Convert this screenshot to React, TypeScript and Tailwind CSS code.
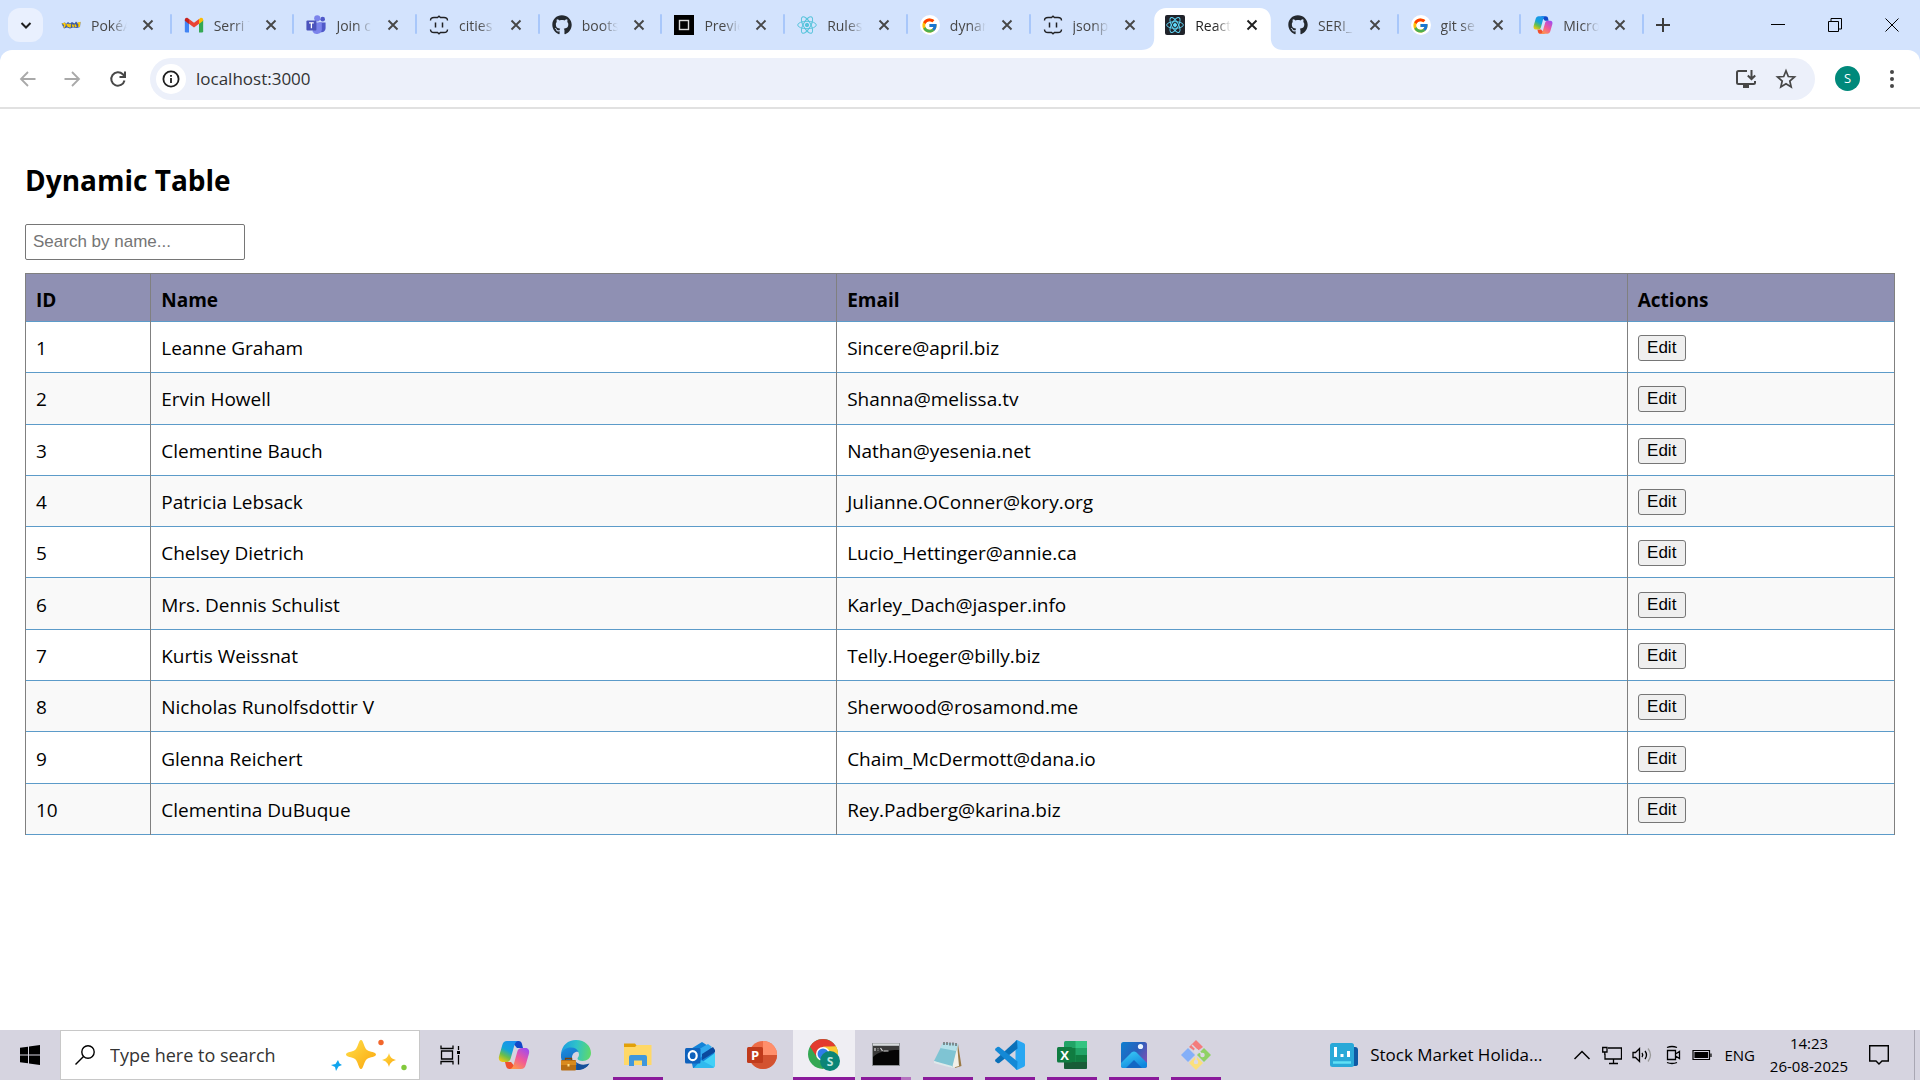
import React from "react";
import { FaGithub } from "react-icons/fa";
import { FcGoogle } from "react-icons/fc";

const users = [
  { id: 1, name: "Leanne Graham", email: "Sincere@april.biz" },
  { id: 2, name: "Ervin Howell", email: "Shanna@melissa.tv" },
  { id: 3, name: "Clementine Bauch", email: "Nathan@yesenia.net" },
  { id: 4, name: "Patricia Lebsack", email: "Julianne.OConner@kory.org" },
  { id: 5, name: "Chelsey Dietrich", email: "Lucio_Hettinger@annie.ca" },
  { id: 6, name: "Mrs. Dennis Schulist", email: "Karley_Dach@jasper.info" },
  { id: 7, name: "Kurtis Weissnat", email: "Telly.Hoeger@billy.biz" },
  { id: 8, name: "Nicholas Runolfsdottir V", email: "Sherwood@rosamond.me" },
  { id: 9, name: "Glenna Reichert", email: "Chaim_McDermott@dana.io" },
  { id: 10, name: "Clementina DuBuque", email: "Rey.Padberg@karina.biz" },
];

/* ---------- favicons ---------- */

const PokeIcon = () => (
  <svg viewBox="0 0 20 20" className="size-5">
    <path d="M0.500 8.500 4 7.500 5 9 7 7 9 8.500 11 7 13.500 8.500 15 6.500 16.500 8 19.500 7 19 12 16 13 12 12.500 9 13.500 6 12.500 3 13.500Z" fill="#3c5aa6" />
    <path d="M1.500 9 3.500 8.500 4 10 3 12.500M5.500 10 7 9.500 7.500 12M9 9v3.500M11.500 9.500 12.500 12M14 9.500 15 12M16.500 8.500 18.500 8 18 12" stroke="#ffcb05" strokeWidth="1.700" fill="none" />
  </svg>
);

const GmailIcon = () => (
  <svg viewBox="0 0 24 24" className="size-5">
    <path d="M1 6v13.500A1.500 1.500 0 0 0 2.500 21H6V10Z" fill="#4285f4" />
    <path d="M23 6v13.500a1.500 1.500 0 0 1-1.500 1.500H18V10Z" fill="#34a853" />
    <path d="M6 4.800 12 9.300 18 4.800V10.500L12 15 6 10.500Z" fill="#ea4335" />
    <path d="M18 4.800 19.300 3.800C21 2.600 23 3.800 23 5.800V7l-5 3.700Z" fill="#fbbc04" />
    <path d="M6 4.800 4.700 3.800C3 2.600 1 3.800 1 5.800V7l5 3.700Z" fill="#c5221f" />
  </svg>
);

const TeamsIcon = () => (
  <svg viewBox="0 0 24 24" className="size-5">
    <circle cx="20" cy="5" r="2.800" fill="#5059c9" />
    <circle cx="13.500" cy="4" r="3.700" fill="#7b83eb" />
    <path d="M15 9h8.500v7a4.500 4.500 0 0 1-6 4.300Z" fill="#5059c9" />
    <path d="M8 9h11v8a6 6 0 0 1-11 3Z" fill="#7b83eb" />
    <rect x="0.500" y="6.500" width="12" height="12" rx="1.200" fill="#4b53bc" />
    <path d="M3.700 9.500h5.600M6.500 9.500v6.500" stroke="#fff" strokeWidth="1.500" />
  </svg>
);

const BracesIcon = () => (
  <svg viewBox="0 0 20 20" className="size-5" fill="none" stroke="#202124" strokeWidth="1.400">
    <path d="M1.500 5.500C1.500 3 3 2.500 5 2.500H8.500L10 1.200 11.500 2.500H15C17 2.500 18.500 3 18.500 5.500" />
    <path d="M1.500 14.500C1.500 17 3 17.500 5 17.500H8.500L10 18.800 11.500 17.500H15C17 17.500 18.500 17 18.500 14.500" />
    <path d="M6.500 7.500v5M13.500 7.500v5" strokeWidth="1.500" />
  </svg>
);

const SandboxIcon = () => (
  <svg viewBox="0 0 20 20" className="size-5">
    <rect width="20" height="20" fill="#000" />
    <rect x="5.500" y="5.500" width="9" height="9" fill="none" stroke="#d8d8d8" strokeWidth="1.400" />
  </svg>
);

const Atom = ({ color }: { color: string }) => (
  <g fill="none" stroke={color} strokeWidth="1">
    <circle cx="10" cy="10" r="1.700" fill={color} />
    <ellipse cx="10" cy="10" rx="9.300" ry="3.700" />
    <ellipse cx="10" cy="10" rx="9.300" ry="3.700" transform="rotate(60 10 10)" />
    <ellipse cx="10" cy="10" rx="9.300" ry="3.700" transform="rotate(120 10 10)" />
  </g>
);

const ReactIcon = () => (
  <svg viewBox="0 0 20 20" className="size-5"><Atom color="#58c4dc" /></svg>
);

const ReactDarkIcon = () => (
  <svg viewBox="0 0 20 20" className="size-5">
    <rect width="20" height="20" rx="2" fill="#20232a" />
    <g transform="translate(1 1) scale(0.900)"><Atom color="#61dafb" /></g>
  </svg>
);

const GoogleIcon = () => (
  <span className="flex size-5 items-center justify-center rounded-full bg-white"><FcGoogle className="size-[17px]" /></span>
);

const CopilotIcon = ({ className }: { className: string }) => (
  <svg viewBox="0 0 32 32" className={className}>
    <defs>
      <linearGradient id="cpA" x1="0.700" y1="0" x2="0.200" y2="1">
        <stop offset="0" stopColor="#1b8ff0" /><stop offset="0.450" stopColor="#12a5d8" />
        <stop offset="0.720" stopColor="#6abf4b" /><stop offset="1" stopColor="#f2c811" />
      </linearGradient>
      <linearGradient id="cpB" x1="0.800" y1="0" x2="0.200" y2="1">
        <stop offset="0" stopColor="#a04bf0" /><stop offset="0.500" stopColor="#f0589a" /><stop offset="1" stopColor="#ff9a4a" />
      </linearGradient>
    </defs>
    <path d="M13 2h7.500c2 0 3 1.200 3.500 3l1 4h-6Z" fill="#1247c8" />
    <path d="M19 30h-7.500c-2 0-3-1.200-3.500-3l-1-4h6Z" fill="#f0502d" />
    <path d="M9 2h11c-2 .5-3 2-3.700 4.500L12.800 19c-.9 3-2 4-4.800 4H4.500C1.500 23 .3 20.500 1 17.500L4.300 6C5 3.500 6.500 2 9 2Z" fill="url(#cpA)" />
    <path d="M23 30H12c2-.5 3-2 3.700-4.500L19.200 13c.9-3 2-4 4.800-4h3.500c3 0 4.200 2.500 3.500 5.500L27.700 26c-.7 2.500-2.200 4-4.700 4Z" fill="url(#cpB)" />
  </svg>
);

/* ---------- browser ---------- */

const tabs = [
  { title: "PokéA", icon: <PokeIcon /> },
  { title: "Serri T", icon: <GmailIcon /> },
  { title: "Join c", icon: <TeamsIcon /> },
  { title: "cities", icon: <BracesIcon /> },
  { title: "boots", icon: <FaGithub className="size-5 text-[#24292f]" /> },
  { title: "Previe", icon: <SandboxIcon /> },
  { title: "Rules", icon: <ReactIcon /> },
  { title: "dynar", icon: <GoogleIcon /> },
  { title: "jsonp", icon: <BracesIcon /> },
  { title: "React", icon: <ReactDarkIcon />, active: true },
  { title: "SERI_", icon: <FaGithub className="size-5 text-[#24292f]" /> },
  { title: "git se", icon: <GoogleIcon /> },
  { title: "Micro", icon: <CopilotIcon className="size-5" /> },
];

const CloseGlyph = () => (
  <svg viewBox="0 0 12 12" className="size-3" stroke="currentColor" strokeWidth="1.900" fill="none"><path d="M1.500 1.500l9 9M10.500 1.500l-9 9" /></svg>
);

function TabStrip() {
  return (
    <div className="flex h-[50px] bg-[#d3e3fd] pl-2">
      <button aria-label="Search tabs" className="mt-2 flex h-[34px] w-[35px] items-center justify-center rounded-xl bg-[#e9f0fe]">
        <svg viewBox="0 0 12 12" className="size-3" fill="none" stroke="#1f1f1f" strokeWidth="2"><path d="M1.500 4 6 8.500 10.500 4" /></svg>
      </button>
      <div className="ml-1.5 flex max-w-[1595px] flex-1">
        {tabs.map((t, i) => {
          const nextActive = tabs[i + 1]?.active;
          return (
            <div key={t.title + i} className={t.active ? "relative mt-2 flex h-[42px] min-w-0 flex-1 items-center" : "relative mt-2 flex h-[34px] min-w-0 flex-1 items-center"}>
              {t.active && (
                <svg viewBox="0 0 140 42" preserveAspectRatio="none" className="absolute top-0 -left-3 h-full w-[142px]" fill="#fff">
                  <path d="M0 42C8 42 13 38 13 30V12C13 5 18 0 25 0H117C124 0 128 5 128 12V30C128 38 133 42 140 42Z" />
                </svg>
              )}
              <div className={t.active ? "relative flex h-[34px] w-full items-center self-start pl-3" : "flex w-full items-center pl-3"}>
                <span className="shrink-0">{t.icon}</span>
                <span className={t.active ? "ml-2.5 w-9 shrink-0 whitespace-nowrap text-[14px] text-[#1f1f1f] [mask-image:linear-gradient(to_right,black_55%,transparent)]" : "ml-2.5 w-9 shrink-0 whitespace-nowrap text-[14px] text-[#474747] [mask-image:linear-gradient(to_right,black_55%,transparent)]"}>
                  {t.title}
                </span>
                <button aria-label={"Close " + t.title} className={t.active ? "ml-[15px] text-[#1f1f1f]" : "ml-[15px] text-[#474747]"}><CloseGlyph /></button>
              </div>
              {!t.active && !nextActive && <span className="absolute top-1.5 right-0 h-5 w-0.5 rounded bg-[#a8c7fa]" />}
            </div>
          );
        })}
      </div>
      <button aria-label="New tab" className="ml-3 mb-[1px] flex w-3.5 items-center justify-center">
        <svg viewBox="0 0 14 14" className="size-3.5" stroke="#3c3c3c" strokeWidth="2"><path d="M7 0v14M0 7h14" /></svg>
      </button>
      <div className="ml-auto flex items-center">
        <button aria-label="Minimize" className="flex h-full w-[57px] items-center justify-center">
          <svg viewBox="0 0 14 14" className="size-3.5" stroke="#000" fill="none"><path d="M0 6.500h14" /></svg>
        </button>
        <button aria-label="Restore" className="flex h-full w-[57px] items-center justify-center">
          <svg viewBox="0 0 14 14" className="size-3.5" stroke="#000" fill="none"><path d="M.5 3.500h10v10H.5ZM3 3.500V.5h10.500v10.500h-3" /></svg>
        </button>
        <button aria-label="Close" className="flex h-full w-[57px] items-center justify-center">
          <svg viewBox="0 0 14 14" className="size-3.5" stroke="#000" fill="none"><path d="M.5.5l13 13M13.500.5l-13 13" /></svg>
        </button>
      </div>
    </div>
  );
}

function Toolbar() {
  return (
    <div className="bg-[#d3e3fd]">
      <div className="flex h-[59px] items-center rounded-t-xl border-b-2 border-[#e1e1e1] bg-white pl-[18px] pr-4">
        <button aria-label="Back" className="flex size-5 items-center justify-center text-[#a9a9a9]">
          <svg viewBox="0 0 20 20" className="size-5" stroke="currentColor" strokeWidth="1.800" fill="none"><path d="M17.500 10H3.500M10 3 3 10l7 7" /></svg>
        </button>
        <button aria-label="Forward" className="ml-6 flex size-5 items-center justify-center text-[#a9a9a9]">
          <svg viewBox="0 0 20 20" className="size-5" stroke="currentColor" strokeWidth="1.800" fill="none"><path d="M2.500 10h14M10 3l7 7-7 7" /></svg>
        </button>
        <button aria-label="Reload" className="ml-[26px] flex size-5 items-center justify-center text-[#474747]">
          <svg viewBox="0 0 20 20" className="size-5" stroke="currentColor" strokeWidth="2" fill="none"><path d="M16.500 11.500A6.700 6.700 0 1 1 14.800 5.300L17 7.500M17 2.500V8H11.500" /></svg>
        </button>
        <div className="ml-[22px] flex h-[42px] flex-1 items-center rounded-full bg-[#ecf0fa] pl-1.5 pr-[18px]">
          <button aria-label="View site information" className="flex size-[30px] items-center justify-center rounded-full bg-white">
            <svg viewBox="0 0 18 18" className="size-[18px]" stroke="#1f1f1f" strokeWidth="1.800" fill="none"><circle cx="9" cy="9" r="7.600" /><path d="M9 8v5M9 5v1.800" /></svg>
          </button>
          <input aria-label="Address" defaultValue="localhost:3000" className="ml-2.5 min-w-0 flex-1 bg-transparent text-[17px] text-[#333] outline-none" />
          <button aria-label="Install app">
            <svg viewBox="0 0 22 22" className="size-[22px]" stroke="#474747" strokeWidth="2" fill="none"><path d="M12 3H3.500Q2 3 2 4.500V14.500Q2 16 3.500 16H18.500Q20 16 20 14.500V13M16.500 2v8.500M12.800 7.500l3.700 3.500 3.700-3.500" /><path d="M8 17h6v3H8Z" fill="#474747" stroke="none" /></svg>
          </button>
          <button aria-label="Bookmark" className="ml-[18px]">
            <svg viewBox="0 0 22 22" className="size-[22px]" stroke="#474747" strokeWidth="1.700" fill="none"><path d="M11 2.800 13.300 8.500 19.500 9 14.800 13 16.200 19 11 15.800 5.800 19 7.200 13 2.500 9 8.700 8.500Z" /></svg>
          </button>
        </div>
        <button aria-label="Profile" className="ml-5 flex size-[25px] items-center justify-center rounded-full bg-[#00897b] text-[13px] text-white">S</button>
        <button aria-label="Menu" className="ml-5 flex w-6 justify-center">
          <svg viewBox="0 0 20 20" className="size-5" fill="#474747"><circle cx="10" cy="3" r="2" /><circle cx="10" cy="10" r="2" /><circle cx="10" cy="17" r="2" /></svg>
        </button>
      </div>
    </div>
  );
}

/* ---------- page ---------- */

function Page() {
  return (
    <main className="flex-1 bg-white px-[25px] pt-[50px] pb-6 text-black">
      <h2 className="text-[28px] leading-[42px] font-bold">Dynamic Table</h2>
      <input aria-label="Search by name" placeholder="Search by name..." className="mt-[23px] block h-9 w-[220px] rounded-[2px] border border-[#767676] px-[7px] font-['Liberation_Sans',Arial,sans-serif] text-[17px] placeholder:text-[#757575]" />
      <table className="mt-[13px] h-[562px] w-full table-fixed border-collapse border border-[#808080] text-left text-[19px] leading-[26px]">
        <colgroup>
          <col className="w-[6.7%]" /><col className="w-[36.7%]" /><col className="w-[42.3%]" /><col />
        </colgroup>
        <thead>
          <tr className="h-12 bg-[#8f90b3]">
            {["ID", "Name", "Email", "Actions"].map((h) => (
              <th key={h} scope="col" className="border-x border-[#808080] px-2.5 pt-1 font-bold">{h}</th>
            ))}
          </tr>
        </thead>
        <tbody>
          {users.map((u) => (
            <tr key={u.id} className="border-y border-[#5c9bc9] even:bg-[#f9f9f9]">
              <td className="border-x border-x-[#808080] px-2.5 pt-[13px] pb-[11px]">{u.id}</td>
              <td className="border-x border-x-[#808080] px-2.5 pt-[13px] pb-[11px]">{u.name}</td>
              <td className="border-x border-x-[#808080] px-2.5 pt-[13px] pb-[11px]">{u.email}</td>
              <td className="border-x border-x-[#808080] px-2.5 pt-[13px] pb-[11px]">
                <button className="block h-[26px] w-12 rounded-[3px] border border-[#767676] bg-[#efefef] font-['Liberation_Sans',Arial,sans-serif] text-[17px] leading-6">Edit</button>
              </td>
            </tr>
          ))}
        </tbody>
      </table>
    </main>
  );
}

/* ---------- taskbar ---------- */

const EdgeIcon = () => (
  <svg viewBox="0 0 32 32" className="size-8">
    <defs>
      <linearGradient id="edA" x1="0" y1="0.400" x2="1" y2="0.500"><stop offset="0" stopColor="#1b9de2" /><stop offset="0.500" stopColor="#2fc2c9" /><stop offset="1" stopColor="#5fd96a" /></linearGradient>
      <linearGradient id="edB" x1="0" y1="0" x2="0.500" y2="1"><stop offset="0" stopColor="#1c8fe0" /><stop offset="1" stopColor="#0f5eb5" /></linearGradient>
    </defs>
    <path d="M1 15C2 6 8 1 16 1c9 0 15 6 15 13 0 5-4 8-8.500 8-3 0-5-1-5-2.500 0-1 1.500-1.500 1.500-4 0-3-3-6-8-6-5 0-8.500 2.500-10 5.500Z" fill="url(#edA)" />
    <path d="M1 15c1.500-4 5-6.500 10-6.500 4 0 6.500 2 7.500 4.500-3-1-6.500 1.500-6.500 5.500 0 5 4.500 8.500 10 8.500 3 0 5-.8 7-2-3 4-7.500 6-12.500 6C7 31 0 24 1 15Z" fill="url(#edB)" />
    <path d="M16 23c4 3.500 9 3 13.500 1.500C27 29 22 31 17 31Z" fill="#154f9a" />
    <rect x="1" y="21" width="15" height="10.500" rx="1" fill="#b86e14" />
    <path d="M1 22h15v4H1Z" fill="#d98a1e" />
    <path d="M5.500 21v-1.500h6V21" stroke="#7a4308" strokeWidth="1.300" fill="none" />
    <rect x="7.500" y="25" width="2" height="2.500" fill="#ffe08a" />
  </svg>
);

const FolderIcon = () => (
  <svg viewBox="0 0 32 32" className="size-8">
    <path d="M2 4.500h11l2 2.500v3H2Z" fill="#e2a008" />
    <path d="M2 8h11l2-2h14.500v20H2Z" fill="#ffd867" />
    <path d="M7 27V18q0-2 2-2h14q2 0 2 2v9h-5v-5.500h-8V27Z" fill="#3f97dc" />
  </svg>
);

const OutlookIcon = () => (
  <svg viewBox="0 0 32 32" className="size-8">
    <path d="M5 11 18 3l12.500 8v15a3 3 0 0 1-3 3H9Z" fill="#1483d8" />
    <path d="M12 12 24 5l4 3-13 12Z" fill="#32a9ee" />
    <path d="M18 15 29 8l2 3v2L18 21Z" fill="#0b4a9e" />
    <path d="M10 29 31 14v12a3 3 0 0 1-3 3Z" fill="#42d0f7" />
    <path d="M10 29 17 21l13 7-2 1Z" fill="#2fb9ee" />
    <rect x="1" y="9" width="15.500" height="15.500" rx="1.500" fill="#0f62bd" />
    <ellipse cx="8.700" cy="16.700" rx="4" ry="4.500" fill="none" stroke="#fff" strokeWidth="2.200" />
  </svg>
);

const PowerPointIcon = () => (
  <svg viewBox="0 0 32 32" className="size-8">
    <circle cx="17" cy="16" r="14" fill="#ed6c47" />
    <path d="M17 2a14 14 0 0 1 14 14H17Z" fill="#ff8f6b" />
    <path d="M3 16h28a14 14 0 0 1-28 0Z" fill="#d35230" />
    <rect x="1" y="8" width="16" height="16" rx="1.500" fill="#c03a1b" />
    <text x="9" y="21" textAnchor="middle" fontSize="13" fontWeight="700" fill="#fff">P</text>
  </svg>
);

const ChromeIcon = () => (
  <svg viewBox="0 0 34 34" className="size-[34px]">
    <circle cx="16" cy="16" r="15" fill="#34a853" />
    <path d="M3 8.500a15 15 0 0 1 26 0L16 9.500 10 19.500Z" fill="#e33b2e" />
    <path d="M29 8.500A15 15 0 0 1 16 31l6.500-11.500L22 9Z" fill="#fcc934" />
    <path d="M16 8.500h13A15 15 0 0 1 30.500 13L20 14Z" fill="#fcc934" />
    <circle cx="16" cy="16" r="7" fill="#fff" />
    <circle cx="16" cy="16" r="5.500" fill="#2f7de8" />
    <circle cx="23" cy="23" r="10" fill="#0b8577" />
    <text x="23" y="27.500" textAnchor="middle" fontSize="12" fontWeight="700" fill="#b9e4df">S</text>
  </svg>
);

const TerminalIcon = () => (
  <svg viewBox="0 0 32 32" className="size-8">
    <rect x="2" y="4" width="28" height="23" fill="#8f9296" />
    <rect x="3" y="4.500" width="26" height="2" fill="#d9dcde" />
    <rect x="3" y="7" width="26" height="19" fill="#050505" />
    <path d="M3 7h26v4C16 11 8 13 3 18Z" fill="#3a3a3a" />
    <path d="M5 9v3M8 9.500v.8M8 11.500v.5M10.500 9l2 3M13.500 12h5" stroke="#d8d8d8" strokeWidth="1.200" fill="none" />
  </svg>
);

const NotepadIcon = () => (
  <svg viewBox="0 0 32 32" className="size-8">
    <path d="M26 5 29.500 27 23 29Z" fill="#9b7a45" />
    <path d="M25 5 27 27 20 29Z" fill="#f1efe8" />
    <path d="M11 4 26 5 20 29 2 22Z" fill="#7fc4d3" />
    <path d="M11 4 26 5 24 12 8 9Z" fill="#b5e1ea" />
    <path d="M2 22 20 27v2L2 24Z" fill="#dfe9ea" />
    <path d="M12 3v3M15 3v3M18 3.500v3M21 3.500v3M24 4v3" stroke="#555" strokeWidth="1.200" />
  </svg>
);

const VsCodeIcon = () => (
  <svg viewBox="0 0 32 32" className="size-8">
    <path d="M23 1 30 4.300Q31 5 31 6V26Q31 27 30 27.700L23 31 21.500 30V2Z" fill="#29a7f2" />
    <path d="M23 1 1.500 20.500Q.5 21.500 1.500 22.500L3.300 24Q4.300 24.700 5.300 24L23.500 9.500Z" fill="#0a70b8" />
    <path d="M23 31 1.500 11.500Q.5 10.500 1.500 9.500L3.300 8Q4.300 7.300 5.300 8L23.500 22.500Z" fill="#1489d6" />
  </svg>
);

const ExcelIcon = () => (
  <svg viewBox="0 0 32 32" className="size-8">
    <rect x="8" y="2" width="23" height="28" rx="1.500" fill="#21a366" />
    <path d="M8 9h11.500v14H8Z" fill="#107c41" />
    <path d="M19.500 2H31v7H19.500Z" fill="#33c481" />
    <path d="M19.500 16H31v7H19.500Z" fill="#107c41" />
    <path d="M8 23h23v5.500q0 1.500-1.500 1.500H9.500Q8 30 8 28.500Z" fill="#185c37" />
    <rect x="1" y="8" width="15.500" height="15.500" rx="1.500" fill="#107c41" />
    <text x="8.700" y="20.500" textAnchor="middle" fontSize="13" fontWeight="700" fill="#fff">X</text>
  </svg>
);

const PhotosIcon = () => (
  <svg viewBox="0 0 32 32" className="size-8">
    <defs>
      <linearGradient id="phA" x1="0" y1="0" x2="1" y2="0.600"><stop offset="0" stopColor="#0d7fd0" /><stop offset="0.600" stopColor="#2a5fbb" /><stop offset="1" stopColor="#7553b5" /></linearGradient>
      <linearGradient id="phB" x1="0" y1="0" x2="0.600" y2="1"><stop offset="0" stopColor="#3fd0f8" /><stop offset="1" stopColor="#0f86dd" /></linearGradient>
    </defs>
    <rect x="3" y="3" width="26" height="26" rx="2.500" fill="url(#phA)" />
    <path d="M3 24 13.500 13.500Q16 11.500 18.500 13.500L29 24v2.500Q29 29 26.500 29H5.500Q3 29 3 26.500Z" fill="url(#phB)" />
    <path d="M8 29 16 21l8 8Z" fill="#1267c4" />
    <circle cx="22.500" cy="7.500" r="2.600" fill="#e8f4ff" />
  </svg>
);

const GitIcon = () => (
  <svg viewBox="0 0 32 32" className="size-8">
    <path d="M16 1 23 8 16 13 9 8Z" fill="#f47c7c" />
    <path d="M8 9 15 16 8 23 1 16Z" fill="#84aff8" />
    <path d="M24 9 31 16 24 23 17 16Z" fill="#8fd166" />
    <path d="M16 17 23 24 16 31 9 24Z" fill="#fbe07a" />
    <g stroke="#dcd9e4" fill="#dcd9e4" strokeWidth="1.500"><path d="M12 6 16 10V23M16 10l7 6" fill="none" /><circle cx="16" cy="12" r="1.500" /><circle cx="22.500" cy="16" r="1.500" /><circle cx="16" cy="23" r="1.500" /></g>
  </svg>
);

const apps = [
  { name: "Copilot", icon: <CopilotIcon className="size-8" />, state: "idle" },
  { name: "Edge", icon: <EdgeIcon />, state: "idle" },
  { name: "File Explorer", icon: <FolderIcon />, state: "open" },
  { name: "Outlook", icon: <OutlookIcon />, state: "idle" },
  { name: "PowerPoint", icon: <PowerPointIcon />, state: "idle" },
  { name: "Chrome", icon: <ChromeIcon />, state: "focused" },
  { name: "Command Prompt", icon: <TerminalIcon />, state: "multi" },
  { name: "Notepad", icon: <NotepadIcon />, state: "open" },
  { name: "Visual Studio Code", icon: <VsCodeIcon />, state: "open" },
  { name: "Excel", icon: <ExcelIcon />, state: "open" },
  { name: "Photos", icon: <PhotosIcon />, state: "open" },
  { name: "Git", icon: <GitIcon />, state: "open" },
];

function Taskbar() {
  return (
    <footer className="flex h-[50px] items-stretch bg-[#d6d4e0] text-black">
      <button aria-label="Start" className="flex w-[60px] items-center justify-center">
        <svg viewBox="0 0 20 20" className="size-5"><path d="M0 2.800 8 1.700V9.500H0ZM9 1.500 20 0V9.500H9ZM0 10.500H8V18.300L0 17.200ZM9 10.500H20V20L9 18.500Z" /></svg>
      </button>
      <label className="flex w-[360px] items-center border border-[#c8c8c8] bg-white pl-3.5 pr-3">
        <svg viewBox="0 0 20 20" className="size-5 shrink-0" fill="none" stroke="#000" strokeWidth="1.400"><circle cx="13" cy="7" r="6.200" /><path d="M8.500 11.500.5 19.500" /></svg>
        <input aria-label="Search" placeholder="Type here to search" className="ml-[15px] min-w-0 flex-1 text-[18px] outline-none placeholder:text-[#333]" />
        <svg viewBox="0 0 76 32" className="h-8 w-[76px] shrink-0">
          <defs><linearGradient id="spk" x1="0" y1="0" x2="1" y2="1"><stop offset="0" stopColor="#ffe04a" /><stop offset="1" stopColor="#fba50c" /></linearGradient></defs>
          <path d="M30 1C32.500 1 33 9 36 11S45 13 45 15.500 39 18 36 20 32.500 30 30 30 27 22 24 20 15 18 15 15.500 21 13 24 11 27.500 1 30 1Z" fill="url(#spk)" />
          <path d="M58 14C59 18 61 20 65 21 61 22 59 24 58 28 57 24 55 22 51 21 55 20 57 18 58 14Z" fill="url(#spk)" />
          <path d="M7 21 8.500 24.500 11 26 7.500 27.500 5 32 4 28 0 26 4.500 25Z" fill="#10a5ee" />
          <circle cx="50" cy="3.500" r="2.700" fill="#f2662b" /><circle cx="73" cy="28.500" r="2.700" fill="#82c93c" />
        </svg>
      </label>
      <button aria-label="Task view" className="flex w-[63px] items-center justify-center pr-1">
        <svg viewBox="0 0 20 20" className="size-5" fill="none" stroke="#000" strokeWidth="1.300"><path d="M1 .5V3.500H13V.5M1 19.500V16.500H13V19.500M1.500 6H12.500V14H1.500ZM18.500 1V5M18.500 10V19.500" /><path d="M17 6h3v3h-3Z" fill="#000" stroke="none" /></svg>
      </button>
      <nav aria-label="Applications" className="flex">
        {apps.map((a) => (
          <button key={a.name} aria-label={a.name} className={a.state === "focused" ? "relative flex w-[62px] items-center justify-center bg-[#efeef3]" : "relative flex w-[62px] items-center justify-center"}>
            {a.icon}
            {a.state === "focused" && <span className="absolute inset-x-0 bottom-0 h-[3px] bg-[#8a1a9b]" />}
            {a.state === "open" && <span className="absolute inset-x-1.5 bottom-0 h-[3px] bg-[#8a1a9b]" />}
            {a.state === "multi" && <span className="absolute inset-x-1.5 bottom-0 h-[3px] border-r-10 border-[#b673c0] bg-[#8a1a9b]" />}
          </button>
        ))}
      </nav>
      <div className="ml-auto flex items-center">
        <button className="flex items-center text-[17px]">
          <svg viewBox="0 0 28 24" className="h-6 w-7"><path d="M8 4h17q3 0 3 3v14q0 2-3 2H8Z" fill="#0f5aa5" /><rect width="24" height="24" rx="2.500" fill="#29a9d8" /><path d="M5.500 4v10M12 11v3M18.500 8v6" stroke="#fff" strokeWidth="3" /><path d="M3 19.500h18" stroke="#5fe0f5" strokeWidth="2.500" /></svg>
          <span className="ml-3">Stock Market Holida...</span>
        </button>
        <button aria-label="Show hidden icons" className="ml-8">
          <svg viewBox="0 0 16 16" className="size-4" fill="none" stroke="#000" strokeWidth="1.500"><path d="M.5 12 8 4.500 15.500 12" /></svg>
        </button>
        <svg viewBox="0 0 20 20" className="ml-3 size-5" fill="none" stroke="#000" strokeWidth="1.300"><path d="M6 3H19.500V14H3V9M11.500 14v4.500M7 18.500h9M.7 2.500H5V7H.7ZM2.800 7v3" /></svg>
        <svg viewBox="0 0 20 20" className="ml-2.5 size-5" fill="none" stroke="#000" strokeWidth="1.300"><path d="M1 7.500H3.500L7.500 3.500V16.500L3.500 12.500H1ZM10 8q1.500 2 0 4M13 6q3 4 0 8" /><path d="M16 3.500q5 6.500 0 13" stroke="#999" /></svg>
        <svg viewBox="0 0 20 20" className="ml-3 size-5" fill="none" stroke="#000" strokeWidth="1.300"><path d="M3.500 5.500H11.500V14.500H3.500ZM11.500 9 15.500 6.500V13.500L11.500 11M3 2.500Q8 .5 13 2.500M3 17.500Q8 19.500 13 17.500" /></svg>
        <svg viewBox="0 0 20 20" className="ml-2 size-5" fill="none" stroke="#000" strokeWidth="1.200"><path d="M1 5.500H17.500V14.500H1ZM19 8.500V12" /><path d="M3 7.500H15.500V12.500H3Z" fill="#000" /></svg>
        <span className="ml-3 text-[15px]">ENG</span>
        <div className="ml-3.5 w-20 text-center text-[15px] leading-[23px]"><div>14:23</div><div>26-08-2025</div></div>
        <button aria-label="Notifications" className="ml-5">
          <svg viewBox="0 0 20 20" className="size-5" fill="none" stroke="#000" strokeWidth="1.400"><path d="M.7.700H19.300V16H13L10 19 7 16H.7Z" /></svg>
        </button>
        <span className="ml-[25px] h-[50px] w-1.5 border-l border-[#a9a7b3]" />
      </div>
    </footer>
  );
}

export default function App() {
  return (
    <div className="flex min-h-screen flex-col bg-white font-['Open_Sans','Noto_Sans',sans-serif]">
      <header>
        <TabStrip />
        <Toolbar />
      </header>
      <Page />
      <Taskbar />
    </div>
  );
}
